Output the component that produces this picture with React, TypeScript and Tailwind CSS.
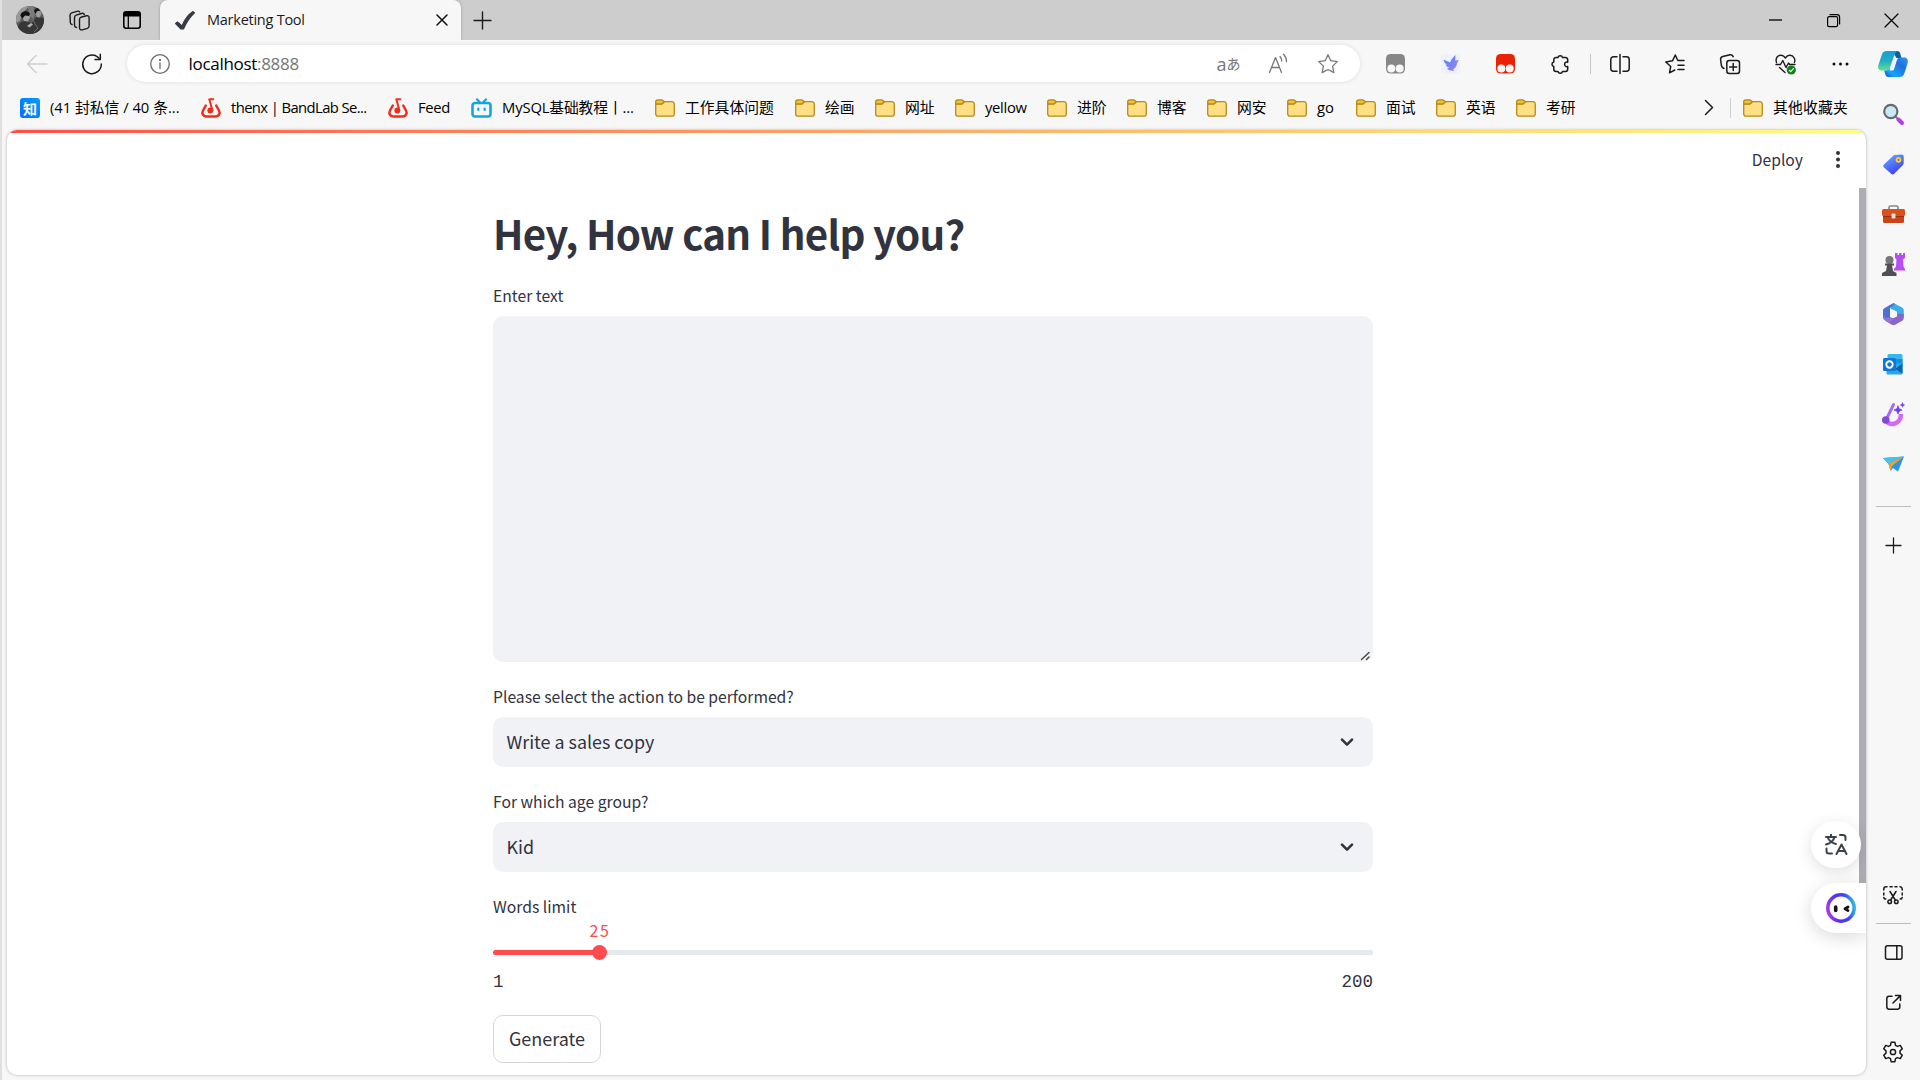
import React from "react";

type P = { children?: React.ReactNode };

const UI = "font-['Open_Sans','Noto_Sans_CJK_SC',sans-serif]";
const BODY = "font-['Noto_Sans_CJK_SC',sans-serif]";

function Icon({ w, h = w, box, sw = 1.4, color = "#1b1b1b", children }: P & { w: number; h?: number; box?: string; sw?: number; color?: string }) {
  return (
    <svg width={w} height={h} viewBox={box ?? `0 0 ${w} ${h}`} fill="none" stroke={color} strokeWidth={sw} strokeLinecap="round" strokeLinejoin="round" className="block shrink-0 overflow-visible">
      {children}
    </svg>
  );
}

const Cell = ({ children }: P) => <div className="flex w-[55px] shrink-0 items-center justify-center">{children}</div>;
const SideCell = ({ children }: P) => <div className="flex h-[50px] w-full shrink-0 items-center justify-center">{children}</div>;

const Folder = () => (
  <Icon w={20} h={18} color="#b58a1a" sw={1.3}>
    <path d="M.7 4.5V14.8A2.3 2.3 0 0 0 3 17.2H17a2.3 2.3 0 0 0 2.3-2.4V5A2.3 2.3 0 0 0 17 2.7H9.5L7 5H1z" fill="#ffdf83" />
    <path d="M.7 4.9V3A2.2 2.2 0 0 1 2.9.8h3.6c.7 0 1.1.3 1.5.7L9.2 2.7 7.4 4.4c-.3.3-.7.5-1.200.5z" fill="#f3c330" />
  </Icon>
);

const BandLab = () => (
  <Icon w={20} h={20} color="#f12c18" sw={2.5}>
    <path d="M4.800 7.500 2 12.500c-1.700 3.200.3 6 3.800 6h8.400c3.500 0 5.500-2.800 3.800-6l-2.800-5" />
    <circle cx="9.300" cy="12.500" r="2.900" fill="#f12c18" stroke="none" />
    <path d="M11.300 12 8.300 1.200h4" strokeWidth="2" />
  </Icon>
);

const Bili = () => (
  <Icon w={21} h={20} color="#13a7dc" sw={2.6}>
    <rect x="1.500" y="5" width="18" height="13.500" rx="2.500" />
    <path d="M6 1.300 8.500 4M15 1.300 12.500 4" strokeWidth="2.200" />
    <path d="M7.300 10.500v1.500M13.700 10.500v1.500" strokeWidth="2.200" />
  </Icon>
);

const Zhihu = () => (
  <div className="flex size-5 shrink-0 items-center justify-center rounded-[3px] bg-linear-to-tr from-[#0a6cff] to-[#0a9bff] font-['Noto_Sans_CJK_SC',sans-serif] text-[14px] leading-none font-bold text-white">知</div>
);

const bookmarks: { icon: React.ReactNode; text: string; cls: string }[] = [
  { icon: <Zhihu />, text: "(41 封私信 / 40 条...", cls: "w-[181px] tracking-[-0.02px]" },
  { icon: <BandLab />, text: "thenx | BandLab Se...", cls: "w-[187px] tracking-[-0.6px]" },
  { icon: <BandLab />, text: "Feed", cls: "w-[83px] tracking-[-0.3px]" },
  { icon: <Bili />, text: "MySQL基础教程丨...", cls: "w-[184px] tracking-[-0.15px]" },
  { icon: <Folder />, text: "工作具体问题", cls: "w-[140px]" },
  { icon: <Folder />, text: "绘画", cls: "w-[80px]" },
  { icon: <Folder />, text: "网址", cls: "w-[80px]" },
  { icon: <Folder />, text: "yellow", cls: "w-[92px] tracking-[-0.3px]" },
  { icon: <Folder />, text: "进阶", cls: "w-[80px]" },
  { icon: <Folder />, text: "博客", cls: "w-[80px]" },
  { icon: <Folder />, text: "网安", cls: "w-[80px]" },
  { icon: <Folder />, text: "go", cls: "w-[69px]" },
  { icon: <Folder />, text: "面试", cls: "w-[80px]" },
  { icon: <Folder />, text: "英语", cls: "w-[80px]" },
  { icon: <Folder />, text: "考研", cls: "w-[80px]" },
];

function TitleBar() {
  return (
    <div className="flex h-10 shrink-0 bg-[#cdcdcd] pl-[14px]">
      <div className="flex w-[28px] items-center">
        <svg width="28" height="28" viewBox="0 0 28 28">
          <defs><clipPath id="av"><circle cx="14" cy="14" r="14" /></clipPath></defs>
          <g clipPath="url(#av)">
            <rect width="28" height="28" fill="#5c5c5c" />
            <path d="M0 0h13l-6 7-3 8-4 2z" fill="#9a9a9a" />
            <path d="M12 0h5l3 6-3 7-4-4z" fill="#7d7d7d" />
            <path d="M1 28c0-8 2-12 8-13l7 2 4-6 8 1v16z" fill="#363636" />
            <path d="M6 9.500l7-1.500 1 4-2.500 3.500L8 15z" fill="#a3a3a3" />
            <path d="M4.500 10c-.5-5 8-6.500 9.500-2l-1 2-4-.5-2.500 3z" fill="#111" />
            <path d="M19 5l5-1 1.500 4-2 3.500-3-.5z" fill="#9c9c9c" />
            <path d="M18 5.500c0-4 6-5 7-1l-4 .8-1.500 2.700z" fill="#161616" />
            <path d="M11 20l4-3 2 1.500-3.500 3z" fill="#b0b0b0" />
            <path d="M17 13l2 5 3 4-4 4" stroke="#6b6b6b" fill="none" />
          </g>
        </svg>
      </div>
      <div className="flex w-[52px] items-center justify-center pl-[20px]">
        <div className="flex w-[22px] items-center">
          <Icon w={21} h={21} sw={1.4}>
            <path d="M11.800 7.300 17.500 5.800c1.500-.3 2.500.3 2.600 1.700v8.300c0 1.400-.6 2.100-1.800 2.500l-5 1.500c-1.600.4-2.700-.3-2.800-1.800V9.500c0-1.200.4-1.900 1.300-2.200z" />
            <path d="M7.500 17.500c-1.300-.2-2-1-2-2.200V7.500c0-1.300.6-2 1.700-2.400L12.500 3.500c1.400-.4 2.400 0 2.800 1" />
            <path d="M3 14.500c-1-.3-1.600-1-1.700-2L1 5.300c0-1.300.6-2 1.700-2.400L8 1.300c1.300-.4 2.200-.1 2.700.7" />
          </Icon>
        </div>
      </div>
      <div className="flex w-[64px] items-center justify-center pl-[8px]">
        <Icon w={18} h={18} sw={1.6} color="#000">
          <rect x=".8" y=".8" width="16.400" height="16.400" rx="2.500" />
          <path d="M1 3.500A2.500 2.500 0 0 1 3.500 1h11A2.500 2.500 0 0 1 17 3.500v1.300H1z" fill="#000" />
          <path d="M5.300 5v12" strokeWidth="1.300" />
        </Icon>
      </div>
      <div className="flex w-[301px] items-center rounded-t-[8px] bg-[#f7f7f7] pr-[14px] pl-[15px] shadow-[0_0_3px_rgba(0,0,0,0.25)]">
        <Icon w={20} h={19} color="#363b42" sw={1.2}>
          <path d="M.6 12.500 2.500 11l4.500 4C9.500 9 13.500 3.500 18 .6l1.400 1.200C14.500 6.500 11 12 8.500 18H6z" fill="#363b42" />
        </Icon>
        <div className={`${UI} ml-[12px] text-[14.5px] tracking-[-0.25px] whitespace-nowrap text-[#1b1b1b]`}>Marketing Tool</div>
        <div className="ml-auto">
          <Icon w={10} h={10} sw={1.5} color="#111"><path d="M0 0 10 10M10 0 0 10" /></Icon>
        </div>
      </div>
      <div className="ml-[13px] flex items-center">
        <Icon w={17} h={17} sw={1.4}><path d="M8.500 0v17M0 8.500h17" /></Icon>
      </div>
      <div className="ml-auto flex items-center pr-[22px]">
        <Icon w={13} h={12} sw={1.3} color="#000"><path d="M0 6h13" strokeLinecap="butt" /></Icon>
        <div className="w-[45px]" />
        <Icon w={13} h={13} sw={1.2} color="#000">
          <rect x=".6" y="2.600" width="10" height="10" rx="1.600" />
          <path d="M3 .6h7a2.600 2.600 0 0 1 2.600 2.600V10" />
        </Icon>
        <div className="w-[45px]" />
        <Icon w={13} h={13} sw={1.2} color="#000"><path d="M0 0 13 13M13 0 0 13" /></Icon>
      </div>
    </div>
  );
}

const Tamper = ({ color }: { color: string }) => (
  <Icon w={19} h={20} sw={0}>
    <rect width="19" height="19.500" rx="4.500" fill={color} />
    <circle cx="5.300" cy="14.500" r="4" fill="#f7f7f7" />
    <circle cx="13.700" cy="14.500" r="4" fill="#f7f7f7" />
  </Icon>
);

function Toolbar() {
  return (
    <div className="flex h-[47px] shrink-0 items-center bg-[#f7f7f7]">
      <div className="flex w-[70px] justify-center">
        <Icon w={20} h={18} color="#cfcfcf" sw={1.4}><path d="M20 9H.5M9 .5.5 9 9 17.500" /></Icon>
      </div>
      <div className="flex w-[39px] justify-center">
        <Icon w={20} h={20} sw={1.5}>
          <path d="M19.300 10A9.300 9.300 0 1 1 16 3.200L18 5.200" />
          <path d="M18.300.3v5.300h-5.300" />
        </Icon>
      </div>
      <div className="ml-[15.500px] flex h-[37px] w-[1233px] items-center rounded-full bg-white pl-[23px] shadow-[0_0_4px_rgba(0,0,0,0.12)]">
        <Icon w={20} h={20} color="#6b6b6b" sw={1.3}>
          <circle cx="10" cy="10" r="9.300" />
          <path d="M10 9v5.500" />
          <circle cx="10" cy="6" r=".5" fill="#6b6b6b" />
        </Icon>
        <div className={`${UI} ml-[19px] text-[17px] tracking-[-0.3px] whitespace-nowrap text-black`}>
          localhost<span className="text-[#767676]">:8888</span>
        </div>
        <div className="mr-[22px] ml-auto flex items-center">
          <div className={`${UI} flex w-[24px] items-center text-[#767676]`}>
            <span className="text-[18px] leading-none">a</span><span className="text-[14px] leading-none">あ</span>
          </div>
          <div className="w-[28px]" />
          <Icon w={20} h={20} color="#767676" sw={1.3}>
            <path d="M.5 18.500 6.500 3.500l6 15M2.700 13.500h7.600" />
            <path d="M11 2.500c1.200 1.300 1.800 2.700 1.800 4.500M14.500.3c2 2 3 4.200 3 7.200" />
          </Icon>
          <div className="w-[29px]" />
          <Icon w={20} h={20} color="#767676" sw={1.3}>
            <path d="M10 .8l2.800 5.900 6.500.9-4.700 4.500 1.200 6.500L10 15.500 4.200 18.600l1.200-6.500L.7 7.600l6.500-.9z" />
          </Icon>
        </div>
      </div>
      <div className="ml-[8px] flex">
        <Cell><Tamper color="#878787" /></Cell>
        <Cell>
          <Icon w={19} h={20} sw={0}>
            <defs><linearGradient id="bird" x1="0" y1="0" x2="1" y2=".6"><stop offset="0" stopColor="#3f8dfb" /><stop offset="1" stopColor="#9a7cf5" /></linearGradient></defs>
            <rect width="19" height="20" rx="2" fill="#edf2fe" />
            <path d="M2.500 5.500 9 8.500C10 6 11.500 3.500 14.500 1l-.3 5.500 3.800-.5c-1 1-1.800 2.500-2.200 4.500-.6 2.500-1.800 4-3.800 4.800l1.500 1.200c-3 .6-5.500 0-7.500-2l2.700-.8c-2.200-.6-3.600-1.700-4.400-3.200l2 .2C4 9.700 3 8 2.500 5.500z" fill="url(#bird)" />
          </Icon>
        </Cell>
        <Cell><Tamper color="#ea2205" /></Cell>
        <Cell>
          <Icon w={20} h={20} sw={1.5}>
            <path d="M6 3.500H8A2.300 2.300 0 0 1 12.500 3.500h3a2.200 2.200 0 0 1 2.200 2.200v2.500a2.300 2.300 0 1 0 0 4.300v2.800a2.200 2.200 0 0 1-2.200 2.200h-3A2.300 2.300 0 0 1 8 17.500H6a2.200 2.200 0 0 1-2.200-2.200v-2.800A2.300 2.300 0 0 1 3.800 8V5.700A2.200 2.200 0 0 1 6 3.500z" />
          </Icon>
        </Cell>
        <div className="flex w-[5px] items-center justify-center"><div className="h-5 w-px bg-[#c4c4c4]" /></div>
        <Cell>
          <Icon w={20} h={20} sw={1.5}>
            <path d="M10 .5v19M7 2.800H3.500A2.700 2.700 0 0 0 .8 5.500v9a2.700 2.700 0 0 0 2.700 2.700H7M13 2.800h3.500a2.700 2.700 0 0 1 2.700 2.700v9a2.700 2.700 0 0 1-2.700 2.700H13" />
          </Icon>
        </Cell>
        <Cell>
          <Icon w={20} h={20} sw={1.5}>
            <path d="M19 6.500h-6.200L10.300 1 7.500 6.800.8 8l4.900 4.500-1.200 6.300L9.800 16M13 11.200h6M13 15.500h6" />
          </Icon>
        </Cell>
        <Cell>
          <Icon w={20} h={20} sw={1.5}>
            <rect x="6.800" y="6.500" width="12.700" height="13" rx="2.500" />
            <path d="M13.200 9.500v7M9.700 13h7M4 14.500C2.300 13.800 1.700 13 1.400 11.500L.6 5.500C.5 3.800 1.200 2.900 2.800 2.500L10 .8c1.600-.3 2.800.4 3.200 2" />
          </Icon>
        </Cell>
        <Cell>
          <Icon w={21} h={20} sw={1.4}>
            <path d="M1.500 8.500C0 4 3 .8 6.500 1.300c1.800.2 3 1.400 3.900 2.700C11.400 2.500 13 1.200 15 1.300c3.500.2 6 4 4.300 7.200M1 10.500h4.500l2.300-4 3.200 7 2.500-4.500 1.200 1.500H20M4.500 13.500l5.500 5" />
            <circle cx="16.300" cy="16" r="4.600" fill="#14801b" stroke="none" />
            <path d="M14.300 16.300l1.400 1.300 2.700-3" stroke="#fff" strokeWidth="1.200" />
          </Icon>
        </Cell>
        <Cell>
          <Icon w={17} h={4} sw={0}>
            <circle cx="2" cy="2" r="1.500" fill="#111" /><circle cx="8.500" cy="2" r="1.500" fill="#111" /><circle cx="15" cy="2" r="1.500" fill="#111" />
          </Icon>
        </Cell>
      </div>
      <div className="flex w-[51px] justify-center">
        <Icon w={30} h={26} sw={0}>
          <defs>
            <linearGradient id="c1" x1="0" y1="0" x2="0" y2="1"><stop offset="0" stopColor="#12a0dc" /><stop offset=".5" stopColor="#22acc4" /><stop offset="1" stopColor="#63e08c" /></linearGradient>
            <linearGradient id="c2" x1="1" y1="0" x2="0" y2="1"><stop offset="0" stopColor="#2f9bee" /><stop offset=".35" stopColor="#1f6fe0" /><stop offset=".75" stopColor="#15a6f8" /><stop offset="1" stopColor="#1d3fd0" /></linearGradient>
          </defs>
          <path d="M14 0h5c2 0 2.800 1 3.300 2.800L23.500 7h-5z" fill="#0d5f9e" />
          <path d="M8.500 0H20c-2 .5-3 2-3.800 4.500L12 16.500C11 19 9.500 19.500 7 19.500H4C.5 19.500-.5 17 .4 14L3.700 4C4.600 1.300 6 0 8.500 0z" fill="url(#c1)" />
          <path d="M21.500 26H10.500c-2 0-2.700-1.200-3.300-3l-1-3.500h1.500c2.500 0 3.500-1 4.500-3.500l-.5 3.500h2.500c1.200 0 1.700-.7 2-1.800L18.800 9.500C19.400 7.500 20.500 6.500 22.500 6.500h3.700c3 0 4.300 2.500 3.400 5.500L26.300 22.500C25.500 25 24 26 21.500 26z" fill="url(#c2)" />
        </Icon>
      </div>
    </div>
  );
}

function BookmarkBar() {
  return (
    <div className={`${UI} flex h-[43px] shrink-0 items-center bg-[#f7f7f7] pb-[2px] pl-[18px] text-[14.8px] text-black`}>
      {bookmarks.map((b, i) => (
        <div key={i} className={`flex shrink-0 items-center gap-[10px] whitespace-nowrap ${b.cls}`}>
          {b.icon}
          <span>{b.text}</span>
        </div>
      ))}
      <div className="ml-[109px]">
        <Icon w={8} h={15} sw={1.5}><path d="M.5.5 7.500 7.500l-7 7" /></Icon>
      </div>
      <div className="mr-[12px] ml-[17px] h-5 w-px bg-[#cfcfcf]" />
      <div className="flex items-center gap-[10px] tracking-[0.2px] whitespace-nowrap"><Folder /><span>其他收藏夹</span></div>
    </div>
  );
}

const Label = ({ children }: P) => (
  <div className={`${BODY} mb-[5px] flex h-[30px] items-center text-[15.7px] whitespace-nowrap text-[#31333f]`}>{children}</div>
);

const Select = ({ children }: P) => (
  <div className={`${BODY} flex h-[50px] items-center justify-between rounded-[10px] bg-[#f0f2f6] pr-[20px] pl-[13.5px] text-[17.9px] text-[#31333f]`}>
    <span className="pb-[2px]">{children}</span>
    <Icon w={12} h={8} sw={2.6} color="#31333f"><path d="M1 1.700 6 6.700 11 1.700" /></Icon>
  </div>
);

function Page() {
  return (
    <div className="relative mr-[2px] mb-[5px] ml-[5px] flex flex-1 flex-col overflow-hidden rounded-[10px] bg-white shadow-[0_0_3px_rgba(0,0,0,0.3)]">
      <div className="h-[3px] shrink-0 bg-linear-to-r from-[#ff4b4b] to-[#fffd80]" />
      <div className="flex h-[55px] shrink-0 items-center justify-end pr-[26px] pb-[2px]">
        <span className={`${BODY} text-[15.7px] text-[#31333f]`}>Deploy</span>
        <div className="ml-[33px]">
          <Icon w={4} h={17} sw={0}>
            <circle cx="2" cy="2" r="2" fill="#31333f" /><circle cx="2" cy="8.500" r="2" fill="#31333f" /><circle cx="2" cy="15" r="2" fill="#31333f" />
          </Icon>
        </div>
      </div>
      <div className="ml-[486px] w-[880px]">
        <h1 className={`${BODY} flex h-[93px] items-center pb-[2px] text-[40.3px] leading-none font-bold tracking-[-0.75px] whitespace-nowrap text-[#31333f]`}>Hey, How can I help you?</h1>
        <Label>Enter text</Label>
        <div className="mb-5 flex h-[346px] items-end justify-end rounded-[10px] bg-[#f0f2f6] pr-[3px] pb-[2px]">
          <Icon w={9} h={8} sw={1.5} color="#4a4a4a"><path d="M.5 7.500 8 .5M5.500 7.500 8 5" /></Icon>
        </div>
        <Label>Please select the action to be performed?</Label>
        <Select>Write a sales copy</Select>
        <div className="h-5" />
        <Label>For which age group?</Label>
        <Select>Kid</Select>
        <div className="h-5" />
        <Label>Words limit</Label>
        <div className="relative mt-[28px] h-[5px] rounded-full bg-[#e5e8ef]">
          <div className="h-full w-[106px] rounded-full bg-[#ff4b4b]" />
          <div className="absolute top-[-5px] left-[98.5px] size-[15px] rounded-full bg-[#ff4b4b]" />
          <div className="absolute top-[-32px] left-[87px] w-[40px] text-center font-['Noto_Sans_CJK_SC',sans-serif] text-[16px] leading-[24px] tracking-[1.5px] text-[#ff4b4b]">25</div>
        </div>
        <div className="mt-[15px] flex h-[24px] items-center justify-between font-['Liberation_Mono',monospace] text-[17.5px] text-[#31333f]">
          <span>1</span>
          <span>200</span>
        </div>
        <div className={`${BODY} mt-[21px] flex h-[48px] w-[108px] items-center justify-center rounded-[10px] border border-[#d6d6d9] pb-[1px] text-[18px] text-[#31333f]`}>Generate</div>
      </div>
      <div className="absolute top-[58px] right-0 h-[695px] w-[7px] bg-[#aeadb3]" />
      <div className="absolute top-[691px] right-[5px] flex h-[47px] w-[50px] items-center justify-center rounded-full bg-white shadow-[0_4px_16px_rgba(0,0,0,0.13)]">
        <Icon w={22} h={21} color="#3c424b" sw={2}>
          <path d="M1 3h10M6 .8V3M2.500 3C4 7 7 9 11 10M9.500 3C8.500 7 5 9.500 1 10.500M15 1h3c1.500 0 2.500 1 2.500 2.500V6M1.500 14.500V17c0 1.500 1 2.500 2.500 2.500h3M11.500 20l5-9.500 5 9.500M13.500 17h6" />
        </Icon>
      </div>
      <div className="absolute top-[753px] right-0 flex h-[50px] w-[55px] items-center rounded-l-full bg-white pl-[15px] shadow-[0_4px_18px_rgba(0,0,0,0.15)]">
        <Icon w={30} h={30} sw={0}>
          <defs><linearGradient id="ring" x1="0" y1=".6" x2="1" y2=".4"><stop offset="0" stopColor="#a63be8" /><stop offset=".35" stopColor="#5430f2" /><stop offset=".7" stopColor="#4440f5" /><stop offset="1" stopColor="#28b8e6" /></linearGradient></defs>
          <circle cx="15" cy="15" r="13.200" stroke="url(#ring)" strokeWidth="3.600" />
          <path d="M9.700 14v3.500" stroke="#151515" strokeWidth="3.600" />
          <path d="M22 14l-3 1.800 3 1.800" stroke="#151515" strokeWidth="2.800" />
        </Icon>
      </div>
    </div>
  );
}

function Sidebar() {
  return (
    <div className="flex w-[52px] shrink-0 flex-col items-center bg-[#f7f7f7] pt-[2px] pr-[2px] pb-[3px]">
      <SideCell>
        <Icon w={20} h={20} sw={0}>
          <path d="M12.500 12.500l2 2" stroke="#777" strokeWidth="2" />
          <path d="M15.500 15.500l3.500 3.500" stroke="#b63cf0" strokeWidth="4" />
          <circle cx="7.800" cy="7.500" r="6.600" fill="#c9e9fb" stroke="#6a6a6a" strokeWidth="2.200" />
        </Icon>
      </SideCell>
      <SideCell>
        <Icon w={21} h={21} sw={0}>
          <defs><linearGradient id="tag" x1="0" y1="0" x2=".6" y2="1"><stop offset="0" stopColor="#69b4ff" /><stop offset="1" stopColor="#3c3ff5" /></linearGradient></defs>
          <path d="M11 1 18.500.5c1.500 0 2.200.7 2.200 2.200V9c0 1-.3 1.700-1 2.300l-8.500 8.500c-1 .9-2 .9-3 0L1 13.500c-1-1-1-2 0-3z" fill="url(#tag)" />
          <circle cx="15.500" cy="5.800" r="2" stroke="#ffd21f" strokeWidth="1.800" />
        </Icon>
      </SideCell>
      <SideCell>
        <Icon w={23} h={18} sw={0}>
          <path d="M7 5V2.500C7 1.500 7.500 1 8.500 1h6c1 0 1.500.5 1.500 1.500V5" stroke="#858585" strokeWidth="1.600" />
          <rect x="1" y="9" width="21" height="9" rx="1.500" fill="#cb4418" />
          <rect y="4" width="23" height="7" rx="1.500" fill="#d9521b" />
          <path d="M1 11h21v1H1z" fill="#982d0c" />
          <rect x="9.500" y="8.500" width="4" height="5" rx="1" fill="#ddd" />
        </Icon>
      </SideCell>
      <SideCell>
        <Icon w={23} h={23} sw={0}>
          <path d="M13 0h2.500v2H17V0h2.500v2H21V0h2v5l-2 1.500.5 7L23 16v1.500H12V16l2-2.500.5-7L13 5z" fill="#b84df5" />
          <circle cx="7.500" cy="7" r="4" fill="#777" />
          <path d="M3 10.500h9v2h-2l1 5.500 3.500 2v3H0v-3L4 18l1-5.500H3z" fill="#505050" />
        </Icon>
      </SideCell>
      <SideCell>
        <Icon w={21} h={22} sw={0}>
          <path d="M10.500 0 19 4.500c1.300.7 1.800 1.500 1.800 3V14L14 10.500V9L7.500 5.500z" fill="#3bb0e6" />
          <path d="M20.800 11v4c0 1.300-.5 2-1.600 2.700l-7 4c-1.200.6-2.200.6-3.400 0L2 17.700 14 13.500v-3z" fill="#8a66cc" />
          <path d="M9 .8c1-.8 2-.8 3 0L7 5.500V14l4 2.200-4 3c-3-.8-5-2-6-3-.7-.7-1-1.400-1-2.400V8c0-1.500.5-2.300 1.700-3z" fill="#4d72d6" />
          <path d="M0 13c2 2 5 2.500 7 1l4 2.200-4.500 3.800L1.500 17C.5 16.200 0 15.500 0 14z" fill="#9a72d0" />
          <path d="M10.500 7 14 9v4l-3.500 2L7 13V9z" fill="#f7f7f7" />
        </Icon>
      </SideCell>
      <SideCell>
        <Icon w={20} h={21} sw={0}>
          <rect x="4.500" width="15" height="13" rx="1.500" fill="#35b8f1" />
          <rect x="12" y="5" width="7.500" height="6" fill="#1490df" />
          <path d="M3.500 9.500h16V19c0 1-.5 1.500-1.500 1.500H5c-1 0-1.500-.5-1.500-1.500z" fill="#28a8ea" />
          <path d="M19.500 9.500v10L12 15z" fill="#0a64ad" />
          <rect y="4" width="13" height="13" rx="1.500" fill="#0f78d4" />
          <ellipse cx="6.500" cy="10.500" rx="3.200" ry="3.300" stroke="#fff" strokeWidth="1.900" />
        </Icon>
      </SideCell>
      <SideCell>
        <Icon w={22} h={23} sw={0}>
          <path d="M4 17c1 6 15 6 15-6" stroke="#d766f0" strokeWidth="4.500" strokeLinecap="butt" />
          <path d="M11.500 1.500 5 15" stroke="#a86cf2" strokeWidth="3" />
          <circle cx="3.800" cy="17" r="3.800" fill="#8348d8" />
          <path d="M16 3l1.200 2.800L20 7l-2.800 1.200L16 11l-1.200-2.800L12 7l2.800-1.200zM20.500 0l.5 1.500 1.500.5-1.500.6-.5 1.600-.6-1.600-1.500-.6 1.500-.5z" fill="#7541e8" stroke="#7541e8" strokeWidth=".8" />
        </Icon>
      </SideCell>
      <SideCell>
        <Icon w={21} h={16} sw={0}>
          <path d="M0 2 21 .5 15 15.500 10 12 7.500 15 5.500 8z" fill="#2d92e8" />
          <path d="M0 2 21 .5 5.500 7.500z" fill="#43c3f5" />
          <path d="M21 .5 5.500 7.500 7.500 15 9 10z" fill="#eea321" />
        </Icon>
      </SideCell>
      <div className="mt-[17px] h-px w-[35px] bg-[#bdbdbd]" />
      <div className="mt-[31px]"><Icon w={15} h={15} sw={1.3}><path d="M7.500 0v15M0 7.500h15" /></Icon></div>
      <div className="mt-auto mb-[19px]">
        <Icon w={20} h={18} sw={1.5}>
          <path d="M.8 4V3A2.200 2.200 0 0 1 3 .8h1M7 .8h2.200M12 .8h2M17 .8a2.200 2.200 0 0 1 2.200 2.200v1M.8 7v2M19.200 7v2M.8 11.500c.2 1 .8 1.600 2 1.600M19.200 11.500c-.2 1-.8 1.600-2 1.600M7 5.500l5.300 8.500M13 5.500 7.700 14" />
          <circle cx="6.700" cy="15.700" r="1.800" /><circle cx="13.300" cy="15.700" r="1.800" />
        </Icon>
      </div>
      <div className="mb-[3px] h-px w-[35px] bg-[#bdbdbd]" />
      <SideCell>
        <Icon w={17} h={15} sw={1.5}><rect x=".5" y=".7" width="16.500" height="13.600" rx="2" /><path d="M11.800.7v13.600" /></Icon>
      </SideCell>
      <SideCell>
        <Icon w={15} h={15} sw={1.5}><path d="M6 1.200H3.200A2.400 2.400 0 0 0 .8 3.600v8.200a2.400 2.400 0 0 0 2.400 2.400h8.200a2.400 2.400 0 0 0 2.400-2.400V9M9.500.6h5v5M14.200.9 7 8" /></Icon>
      </SideCell>
      <SideCell>
        <Icon w={20} h={20} sw={1.5}>
          <path d="M8.100 .3h3.800l.6 3 1.900 1.100 2.900-1 2 3.400L17 8.900v2.200l2.300 2.100-2 3.400-2.900-1-1.900 1.100-.6 3H8.100l-.6-3-1.900-1.100-2.900 1-2-3.400L3 11.100V8.900L.7 6.800l2-3.400 2.900 1 1.900-1.100z" />
          <circle cx="10" cy="10" r="2.600" />
        </Icon>
      </SideCell>
    </div>
  );
}

export default function App() {
  return (
    <div className="flex h-[1080px] w-[1920px] overflow-hidden bg-[#f7f7f7]">
      <div className="w-[2px] shrink-0 bg-[#e0e0e0]" />
      <div className="flex w-[1918px] flex-col">
        <TitleBar />
        <Toolbar />
        <div className="flex flex-1">
          <div className="flex w-[1866px] flex-col">
            <BookmarkBar />
            <Page />
          </div>
          <Sidebar />
        </div>
      </div>
    </div>
  );
}
